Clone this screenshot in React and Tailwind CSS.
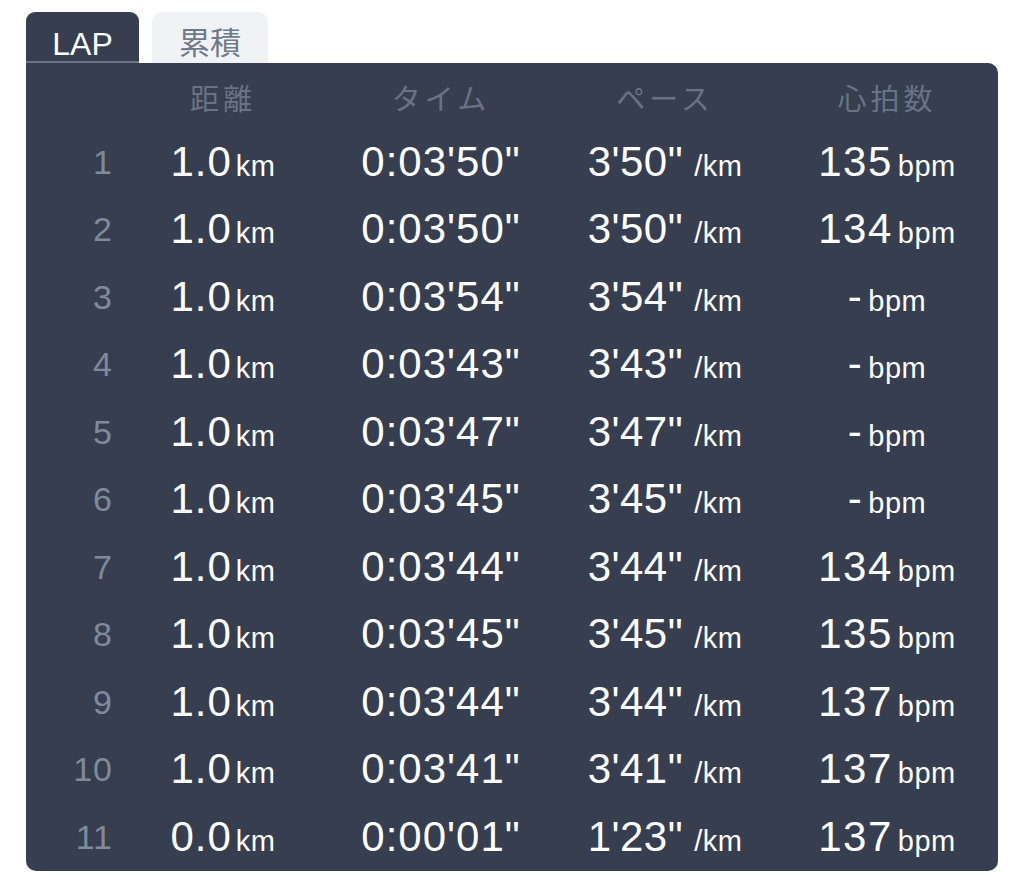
import React from "react";

const rows = [
  ["1", "1.0", "0:03'50\"", "3'50\"", "135"],
  ["2", "1.0", "0:03'50\"", "3'50\"", "134"],
  ["3", "1.0", "0:03'54\"", "3'54\"", "-"],
  ["4", "1.0", "0:03'43\"", "3'43\"", "-"],
  ["5", "1.0", "0:03'47\"", "3'47\"", "-"],
  ["6", "1.0", "0:03'45\"", "3'45\"", "-"],
  ["7", "1.0", "0:03'44\"", "3'44\"", "134"],
  ["8", "1.0", "0:03'45\"", "3'45\"", "135"],
  ["9", "1.0", "0:03'44\"", "3'44\"", "137"],
  ["10", "1.0", "0:03'41\"", "3'41\"", "137"],
  ["11", "0.0", "0:00'01\"", "1'23\"", "137"],
];

const sans = "font-['Liberation_Sans','Helvetica','Arial',sans-serif]";
const cjk = "font-['Noto_Sans_CJK_JP','Noto_Sans',sans-serif]";

export default function App() {
  return (
    <div className="min-h-[876px] w-[1024px] bg-white pl-[26px] pt-[12px]">
      <div className="flex items-end gap-[13px]">
        <div className={`flex h-[51px] w-[113px] items-end justify-center rounded-t-[9px] border-b-2 border-[#6d7380] bg-[#363e4f] pb-[1px] text-[32px] leading-none text-white ${sans}`}>
          LAP
        </div>
        <div className={`flex h-[51px] w-[116px] items-center justify-center rounded-t-[10px] bg-[#f0f2f5] pt-[6px] text-[31px] leading-none text-[#6f7a88] ${cjk}`}>
          累積
        </div>
      </div>
      <div className="w-[972px] rounded-tr-[10px] rounded-b-[10px] bg-[#363e4f] pb-[0px]">
        <div className={`flex h-[65px] items-center pt-[4px] text-[29px] leading-none tracking-[4px] text-[#687483] ${cjk}`}>
          <div className="w-[87px]" />
          <div className="w-[220px] text-center">距離</div>
          <div className="w-[216px] text-center">タイム</div>
          <div className="w-[232px] text-center">ペース</div>
          <div className="w-[212px] text-center">心拍数</div>
        </div>
        {rows.map((r) => (
          <div key={r[0]} className={`flex h-[67.5px] items-center leading-none text-white ${sans}`}>
            <div className="w-[87px] text-right text-[34px] tracking-[1px] text-[#7f8b99]">{r[0]}</div>
            <div className="w-[220px] text-center">
              <span className="text-[42px] tracking-[1px]">{r[1]}</span>
              <span className="ml-[4px] text-[29px] tracking-[0.5px]">km</span>
            </div>
            <div className="w-[216px] text-center">
              <span className="text-[42px] tracking-[1px]">{r[2]}</span>
            </div>
            <div className="w-[232px] text-center">
              <span className="text-[42px] tracking-[0.5px]">{r[3]}</span>
              <span className="ml-[11px] text-[29px] tracking-[0.5px]">/km</span>
            </div>
            <div className="w-[212px] text-center">
              <span className="text-[42px] tracking-[1.5px]">{r[4]}</span>
              <span className="ml-[5px] text-[29px] tracking-[0.5px]">bpm</span>
            </div>
          </div>
        ))}
      </div>
    </div>
  );
}
